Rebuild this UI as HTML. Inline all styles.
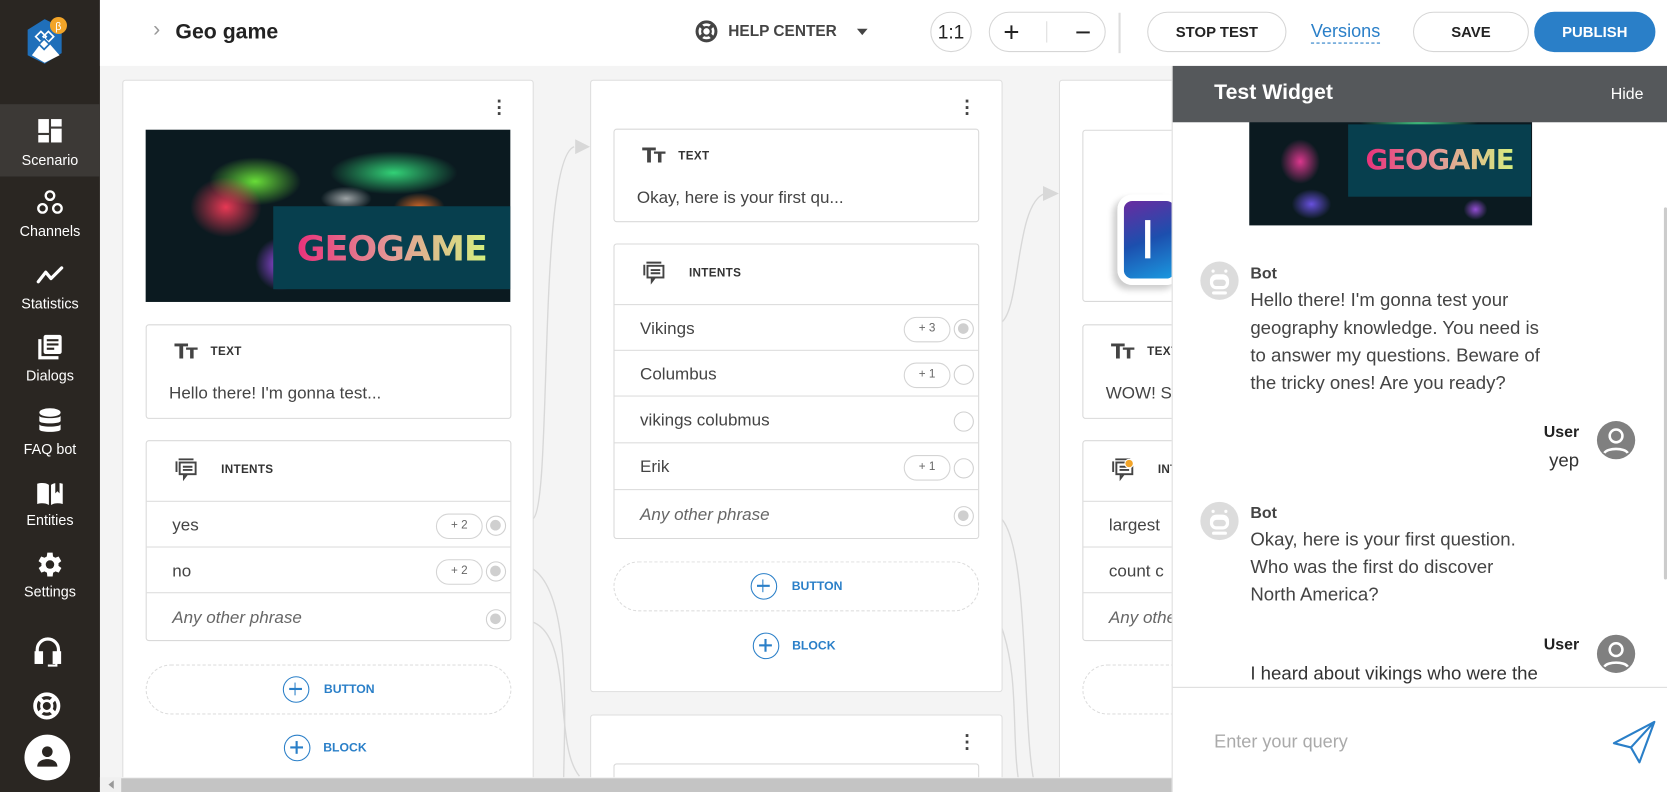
<!DOCTYPE html>
<html><head><meta charset="utf-8">
<style>
*{box-sizing:border-box;margin:0;padding:0}
html,body{width:1667px;height:792px;overflow:hidden;background:#f4f4f4;font-family:"Liberation Sans",sans-serif}
#w{position:absolute;left:0;top:0;width:1568px;height:745px;transform:scale(1.0632);transform-origin:0 0;background:#f4f4f4;overflow:hidden}
.a{position:absolute}
.side{left:0;top:0;width:94px;height:745px;background:#2a2622}
.nav{position:absolute;left:0;width:94px;text-align:center;color:#fff;font-size:13.5px}
.top{left:94px;top:0;width:1474px;height:62px;background:#fff}
.pill{position:absolute;border:1.5px solid #d6d6d6;border-radius:20px;height:38px;top:11px;font-size:14px;font-weight:bold;color:#222;display:flex;align-items:center;justify-content:center}
.card{position:absolute;background:#fff;border:1px solid #dedede;border-radius:3px}
.box{position:absolute;background:#fff;border:1px solid #d9d9d9;border-radius:3px}
.lbl{font-size:11px;font-weight:bold;color:#333;letter-spacing:.3px}
.row{position:absolute;left:0;right:0;border-top:1px solid #dcdcdc;font-size:16px;color:#444;padding-left:24px;padding-top:3px;display:flex;align-items:center}
.cnt{position:absolute;right:26px;width:44px;height:24px;border:1.5px solid #d4d4d4;border-radius:12px;font-size:11px;color:#666;text-align:center;line-height:21px}
.dot{position:absolute;right:4px;width:19px;height:19px;border:1.5px solid #d0d0d0;border-radius:50%}
.dot.f::after{content:"";position:absolute;left:3px;top:3px;width:10px;height:10px;border-radius:50%;background:#cfcfcf}
.dash{position:absolute;border:1.5px dashed #dcdcdc;border-radius:24px;display:flex;align-items:center;justify-content:center;color:#2a7fc8;font-size:11.5px;font-weight:bold;gap:14px}
.plus{width:25px;height:25px;border:1.7px solid #2a7fc8;border-radius:50%;position:relative;flex:none}
.plus::before{content:"";position:absolute;left:5px;width:12px;top:10px;height:1.7px;background:#2a7fc8}
.plus::after{content:"";position:absolute;top:5px;height:12px;left:10px;width:1.7px;background:#2a7fc8}
.map{position:absolute;overflow:hidden;background:
radial-gradient(ellipse 14% 25% at 22% 45%,rgba(255,60,90,.9),transparent 70%),
radial-gradient(ellipse 18% 20% at 30% 30%,rgba(120,255,60,.85),transparent 70%),
radial-gradient(ellipse 10% 22% at 37% 78%,rgba(170,80,255,.9),transparent 70%),
radial-gradient(ellipse 25% 18% at 68% 25%,rgba(60,255,140,.8),transparent 70%),
radial-gradient(ellipse 10% 10% at 55% 40%,rgba(255,255,255,.6),transparent 70%),
radial-gradient(ellipse 10% 12% at 75% 45%,rgba(255,120,40,.8),transparent 70%),
#0b1a20}
.geo{position:absolute;background:#073f4e;display:flex;align-items:center;justify-content:center;font-weight:bold;font-family:"DejaVu Sans","Liberation Sans",sans-serif;letter-spacing:-1px}
.geo span{background:linear-gradient(90deg,#e8317a,#e39a96 50%,#d6f07e);-webkit-background-clip:text;background-clip:text;color:transparent}
.ti{display:flex;align-items:center;gap:14px;position:absolute;left:24px}
.tt{font-weight:bold;font-size:19px;color:#444;letter-spacing:-2px;font-family:"DejaVu Sans",sans-serif}
.msg{position:absolute;font-size:17.5px;line-height:26px;color:#444}
.bav{position:absolute;width:36px;height:36px;border-radius:50%;background:#dcdcdc}
.uav{position:absolute;width:36px;height:36px;border-radius:50%;background:#808080;overflow:hidden}
</style></head><body><div id="w">

<!-- sidebar -->
<div class="a side">
 <svg class="a" style="left:22px;top:14px" width="44" height="52" viewBox="0 0 44 52"><path d="M20 4 L36 12 L36 36 L20 46 L4 38 L4 14Z" fill="#1f6fba"/><path d="M8 38 L20 22 L34 38 L20 45Z" fill="#fff"/><g fill="none" stroke="#fff" stroke-width="1.6"><rect x="13" y="17" width="7" height="7" transform="rotate(45 16.5 20.5)"/><rect x="20" y="17" width="7" height="7" transform="rotate(45 23.5 20.5)"/><rect x="16" y="24" width="7" height="7" transform="rotate(45 19.5 27.5)" stroke="#1f6fba"/></g><circle cx="33" cy="10" r="8" fill="#f2a428"/><text x="30" y="14" font-size="10" fill="#fff" font-family="Liberation Sans">β</text></svg>
 <div class="a" style="left:0;top:98px;width:94px;height:68px;background:#3c3936"></div>
 <div class="nav" style="top:111px"><svg width="24" height="24" viewBox="0 0 24 24" fill="#fff"><rect x="1" y="1" width="10" height="13"/><rect x="13" y="1" width="10" height="7"/><rect x="13" y="10" width="10" height="13"/><rect x="1" y="16" width="10" height="7"/></svg><div style="margin-top:5px">Scenario</div></div>
 <div class="nav" style="top:178px"><svg width="26" height="26" viewBox="0 0 26 26" fill="none" stroke="#fff" stroke-width="2.2"><circle cx="13" cy="6" r="4"/><circle cx="6" cy="18" r="4"/><circle cx="20" cy="18" r="4"/></svg><div style="margin-top:3px">Channels</div></div>
 <div class="nav" style="top:248px"><svg width="28" height="22" viewBox="0 0 28 22" fill="none" stroke="#fff" stroke-width="3" stroke-linecap="round" stroke-linejoin="round"><path d="M3 17 L10 8 L15 14 L25 4"/></svg><div style="margin-top:5px">Statistics</div></div>
 <div class="nav" style="top:314px"><svg width="26" height="26" viewBox="0 0 26 26" fill="#fff"><path d="M2 5h3v16h16v3H2z"/><rect x="7" y="1" width="17" height="18" rx="2"/><g fill="#2a2622"><rect x="10" y="5" width="11" height="2"/><rect x="10" y="9" width="11" height="2"/><rect x="10" y="13" width="7" height="2"/></g></svg><div style="margin-top:3px">Dialogs</div></div>
 <div class="nav" style="top:383px"><svg width="24" height="26" viewBox="0 0 24 26" fill="#fff"><ellipse cx="12" cy="5" rx="10" ry="4"/><path d="M2 8c0 3 20 3 20 0v5c0 3-20 3-20 0z"/><path d="M2 16c0 3 20 3 20 0v5c0 3-20 3-20 0z"/></svg><div style="margin-top:3px">FAQ bot</div></div>
 <div class="nav" style="top:452px"><svg width="26" height="24" viewBox="0 0 26 24" fill="#fff"><path d="M1 3c4-1 8-1 11 1v19c-3-2-7-2-11-1z"/><path d="M14 4c3-2 7-2 11-1v19c-4-1-8-1-11 1z"/><path d="M18 2v10l2-2 2 2V1z" fill="#2a2622"/></svg><div style="margin-top:3px">Entities</div></div>
 <div class="nav" style="top:516px"><svg width="30" height="30" viewBox="0 0 24 24" fill="#fff"><path d="M19.4 13a7.5 7.5 0 000-2l2.1-1.6-2-3.5-2.5 1a7 7 0 00-1.7-1L15 3h-4l-.4 2.9a7 7 0 00-1.7 1l-2.5-1-2 3.5L6.6 11a7.5 7.5 0 000 2l-2.1 1.6 2 3.5 2.5-1a7 7 0 001.7 1L11 21h4l.4-2.9a7 7 0 001.7-1l2.5 1 2-3.5z" transform="translate(-1 0)"/><circle cx="12" cy="12" r="3.2" fill="#2a2622"/></svg><div style="margin-top:0px">Settings</div></div>
 <svg class="a" style="left:31px;top:598px" width="28" height="30" viewBox="0 0 28 30" fill="none" stroke="#fff" stroke-width="3"><path d="M4 18v-5a10 10 0 0120 0v5"/><rect x="3" y="16" width="5" height="9" fill="#fff"/><rect x="20" y="16" width="5" height="9" fill="#fff"/><path d="M22 25v3h-8" stroke-width="2"/></svg>
 <svg class="a" style="left:31px;top:651px" width="26" height="26" viewBox="0 0 26 26"><circle cx="13" cy="13" r="11" fill="none" stroke="#fff" stroke-width="3.5"/><circle cx="13" cy="13" r="5" fill="none" stroke="#fff" stroke-width="2.5"/><g stroke="#fff" stroke-width="4"><path d="M5 5l4 4M21 5l-4 4M5 21l4-4M21 21l-4-4"/></g></svg>
 <div class="a" style="left:23px;top:691px;width:43px;height:43px;border-radius:50%;background:#fff"><svg style="position:absolute;left:11px;top:10px" width="21" height="22" viewBox="0 0 21 22" fill="#2a2622"><circle cx="10.5" cy="6" r="5"/><path d="M1 20c0-5 5-7 9.5-7s9.5 2 9.5 7z"/></svg></div>
</div>

<!-- top bar -->
<div class="a top">
 <div class="a" style="left:50px;top:17px;font-size:20px;color:#999">›</div>
 <div class="a" style="left:71px;top:19px;font-size:20px;font-weight:bold;color:#222">Geo game</div>
 <svg class="a" style="left:560px;top:19px" width="21" height="21" viewBox="0 0 26 26"><circle cx="13" cy="13" r="11" fill="none" stroke="#444" stroke-width="3.5"/><circle cx="13" cy="13" r="5" fill="none" stroke="#444" stroke-width="2.5"/><g stroke="#444" stroke-width="4"><path d="M5 5l4 4M21 5l-4 4M5 21l4-4M21 21l-4-4"/></g></svg>
 <div class="a" style="left:591px;top:22px;font-size:14.5px;font-weight:bold;color:#444">HELP CENTER</div>
 <div class="a" style="left:712px;top:27px;border:5px solid transparent;border-top:6px solid #444"></div>
 <div class="pill" style="left:781px;width:39px;font-weight:normal;font-size:18px">1:1</div>
 <div class="pill" style="left:836px;width:110px;font-weight:normal;font-size:26px;justify-content:space-around"><span>+</span><span style="width:1px;height:20px;background:#ddd"></span><span>−</span></div>
 <div class="a" style="left:958px;top:12px;width:1.5px;height:38px;background:#ddd"></div>
 <div class="pill" style="left:985px;width:131px">STOP TEST</div>
 <div class="a" style="left:1139px;top:20px;font-size:17px;color:#2a7fc8;border-bottom:1.5px dashed #2a7fc8;line-height:20px">Versions</div>
 <div class="pill" style="left:1235px;width:109px">SAVE</div>
 <div class="pill" style="left:1349px;width:114px;background:#2a7fc8;border-color:#2a7fc8;color:#fff">PUBLISH</div>
</div>

<!-- connectors -->
<svg class="a" style="left:0;top:0" width="1568" height="745" fill="none" stroke="#d8d8d8" stroke-width="1.3">
 <path d="M501 488 C520 480 505 150 540 138"/><path d="M541 131 l14 7 l-14 7z" fill="#d8d8d8" stroke="none"/>
 <path d="M942 303 C960 290 955 190 983 182"/><path d="M981 175 l15 7 l-15 7z" fill="#d8d8d8" stroke="none"/>
 <path d="M501 585 C540 600 520 700 545 730"/><path d="M501 535 C540 560 530 690 530 745"/>
 <path d="M942 488 C970 520 960 700 975 745"/><path d="M942 590 C960 640 950 700 960 745"/>
</svg>

<!-- card 1 -->
<div class="card" style="left:115px;top:75px;width:387px;height:680px">
 <div class="a" style="left:351px;top:16px;font-size:18px;color:#444;font-weight:bold;line-height:6px">·<br>·<br>·</div>
 <div class="map" style="left:21px;top:46px;width:343px;height:162px"><div class="geo" style="left:120px;top:72px;width:223px;height:78px;font-size:33px"><span>GEOGAME</span></div></div>
 <div class="box" style="left:21px;top:229px;width:344px;height:89px">
  <div class="ti" style="top:14px;left:26px"><span class="tt">Tт</span><span class="lbl">TEXT</span></div>
  <div class="a" style="left:21px;top:56px;font-size:16px;color:#444">Hello there! I'm gonna test...</div>
 </div>
 <div class="box" style="left:21px;top:338px;width:344px;height:189px">
  <div class="ti" style="top:16px;left:26px"><svg width="22" height="22" viewBox="0 0 22 22" fill="none" stroke="#444" stroke-width="1.8"><path d="M2 3v10"/><path d="M4 1h14"/><rect x="5" y="4" width="15" height="11"/><path d="M9 15v4l3-4"/><path d="M8 8h9M8 11h9"/></svg><span class="lbl" style="margin-left:8px">INTENTS</span></div>
  <div class="row" style="top:56px;height:43px">yes<div class="cnt">+ 2</div><div class="dot f"></div></div>
  <div class="row" style="top:99px;height:43px">no<div class="cnt">+ 2</div><div class="dot f"></div></div>
  <div class="row" style="top:142px;height:46px;font-style:italic;color:#666">Any other phrase<div class="dot f"></div></div>
 </div>
 <div class="dash" style="left:21px;top:549px;width:344px;height:47px"><div class="plus"></div>BUTTON</div>
 <div class="a" style="left:151px;top:615px;display:flex;align-items:center;gap:12px;color:#2a7fc8;font-size:11.5px;font-weight:bold"><div class="plus"></div>BLOCK</div>
</div>

<!-- card 2 -->
<div class="card" style="left:555px;top:75px;width:388px;height:576px">
 <div class="a" style="left:351px;top:16px;font-size:18px;color:#444;font-weight:bold;line-height:6px">·<br>·<br>·</div>
 <div class="box" style="left:21px;top:45px;width:344px;height:88px">
  <div class="ti" style="top:14px;left:26px"><span class="tt">Tт</span><span class="lbl">TEXT</span></div>
  <div class="a" style="left:21px;top:56px;font-size:16px;color:#444">Okay, here is your first qu...</div>
 </div>
 <div class="box" style="left:21px;top:153px;width:344px;height:278px">
  <div class="ti" style="top:16px;left:26px"><svg width="22" height="22" viewBox="0 0 22 22" fill="none" stroke="#444" stroke-width="1.8"><path d="M2 3v10"/><path d="M4 1h14"/><rect x="5" y="4" width="15" height="11"/><path d="M9 15v4l3-4"/><path d="M8 8h9M8 11h9"/></svg><span class="lbl" style="margin-left:8px">INTENTS</span></div>
  <div class="row" style="top:56px;height:43px">Vikings<div class="cnt">+ 3</div><div class="dot f"></div></div>
  <div class="row" style="top:99px;height:43px">Columbus<div class="cnt">+ 1</div><div class="dot"></div></div>
  <div class="row" style="top:142px;height:44px">vikings colubmus<div class="dot"></div></div>
  <div class="row" style="top:186px;height:44px">Erik<div class="cnt">+ 1</div><div class="dot"></div></div>
  <div class="row" style="top:230px;height:46px;font-style:italic;color:#666">Any other phrase<div class="dot f"></div></div>
 </div>
 <div class="dash" style="left:21px;top:452px;width:344px;height:47px"><div class="plus"></div>BUTTON</div>
 <div class="a" style="left:152px;top:519px;display:flex;align-items:center;gap:12px;color:#2a7fc8;font-size:11.5px;font-weight:bold"><div class="plus"></div>BLOCK</div>
</div>
<div class="card" style="left:555px;top:672px;width:388px;height:100px">
 <div class="a" style="left:351px;top:16px;font-size:18px;color:#444;font-weight:bold;line-height:6px">·<br>·<br>·</div>
 <div class="box" style="left:21px;top:45px;width:344px;height:60px"></div>
</div>

<!-- card 3 -->
<div class="card" style="left:996px;top:75px;width:388px;height:680px">
 <div class="box" style="left:21px;top:46px;width:344px;height:162px">
  <div class="a" style="left:32px;top:60px;width:60px;height:85px;border-radius:14px;background:linear-gradient(160deg,#6a2ba0,#1c4fae 50%,#1b9ae0);border:6px solid #fff;box-shadow:-4px 4px 6px rgba(0,0,0,.2)"><div style="position:absolute;left:20px;top:18px;width:5px;height:36px;background:#fff"></div></div>
 </div>
 <div class="box" style="left:21px;top:229px;width:344px;height:89px">
  <div class="ti" style="top:14px;left:26px"><span class="tt">Tт</span><span class="lbl">TEXT</span></div>
  <div class="a" style="left:21px;top:56px;font-size:16px;color:#444">WOW! S</div>
 </div>
 <div class="box" style="left:21px;top:338px;width:344px;height:189px">
  <div class="ti" style="top:16px;left:26px"><svg width="22" height="22" viewBox="0 0 22 22" fill="none" stroke="#444" stroke-width="1.8"><path d="M2 3v10"/><path d="M4 1h14"/><rect x="5" y="4" width="15" height="11"/><path d="M9 15v4l3-4"/><path d="M8 8h9M8 11h9"/><circle cx="17" cy="5" r="4" fill="#f2a428" stroke="#fff" stroke-width="1"/></svg><span class="lbl" style="margin-left:8px">INTENTS</span></div>
  <div class="row" style="top:56px;height:43px">largest</div>
  <div class="row" style="top:99px;height:43px">count c</div>
  <div class="row" style="top:142px;height:46px;font-style:italic;color:#666">Any other phrase</div>
 </div>
 <div class="dash" style="left:21px;top:549px;width:344px;height:47px"></div>
</div>

<!-- bottom scrollbar -->
<div class="a" style="left:94px;top:731px;width:1010px;height:14px;background:#f0f0f0"></div>
<div class="a" style="left:114px;top:732px;width:990px;height:13px;background:#c4c4c4"></div>
<div class="a" style="left:98px;top:734px;border:4px solid transparent;border-right:5px solid #999"></div>

<!-- widget -->
<div class="a" style="left:1102px;top:62px;width:466px;height:683px;background:#fff;border-left:1px solid #ddd">
 <div class="map" style="left:72px;top:50px;width:266px;height:100px;background:
radial-gradient(ellipse 10% 30% at 18% 40%,rgba(255,60,160,.85),transparent 70%),
radial-gradient(ellipse 10% 20% at 22% 80%,rgba(120,90,255,.85),transparent 70%),
radial-gradient(ellipse 30% 10% at 60% 3%,rgba(80,255,160,.8),transparent 70%),
radial-gradient(ellipse 6% 14% at 80% 85%,rgba(180,90,255,.8),transparent 70%),#0b1a20"><div class="geo" style="left:93px;top:5px;width:172px;height:68px;font-size:26px"><span>GEOGAME</span></div></div>
 <div class="a" style="left:0;top:0;width:466px;height:53px;background:#55585b;color:#fff">
  <div class="a" style="left:39px;top:14px;font-size:20px;font-weight:bold">Test Widget</div>
  <div class="a" style="left:412px;top:18px;font-size:15px">Hide</div>
 </div>
 <div class="bav" style="left:26px;top:184px"><svg width="36" height="36" viewBox="0 0 36 36"><rect x="9" y="12" width="18" height="14" rx="6" fill="#fff"/><rect x="12" y="17" width="12" height="6" rx="3" fill="#dcdcdc"/><circle cx="12" cy="9" r="1.5" fill="#fff"/><circle cx="24" cy="9" r="1.5" fill="#fff"/><rect x="11" y="28" width="14" height="3" rx="1.5" fill="#fff"/></svg></div>
 <div class="a" style="left:73px;top:187px;font-size:15px;font-weight:bold;color:#444">Bot</div>
 <div class="msg" style="left:73px;top:207px">Hello there! I'm gonna test your<br>geography knowledge. You need is<br>to answer my questions. Beware of<br>the tricky ones! Are you ready?</div>
 <div class="a" style="left:349px;top:336px;font-size:15px;font-weight:bold;color:#222">User</div>
 <div class="msg" style="left:354px;top:358px;color:#333">yep</div>
 <div class="uav" style="left:399px;top:334px"><svg width="36" height="36" viewBox="0 0 36 36" fill="none" stroke="#fff" stroke-width="2.4"><circle cx="18" cy="14" r="6"/><path d="M7 30c3-5 19-5 22 0"/></svg></div>
 <div class="bav" style="left:26px;top:410px"><svg width="36" height="36" viewBox="0 0 36 36"><rect x="9" y="12" width="18" height="14" rx="6" fill="#fff"/><rect x="12" y="17" width="12" height="6" rx="3" fill="#dcdcdc"/><circle cx="12" cy="9" r="1.5" fill="#fff"/><circle cx="24" cy="9" r="1.5" fill="#fff"/><rect x="11" y="28" width="14" height="3" rx="1.5" fill="#fff"/></svg></div>
 <div class="a" style="left:73px;top:412px;font-size:15px;font-weight:bold;color:#444">Bot</div>
 <div class="msg" style="left:73px;top:432px">Okay, here is your first question.<br>Who was the first do discover<br>North America?</div>
 <div class="a" style="left:349px;top:536px;font-size:15px;font-weight:bold;color:#222">User</div>
 <div class="uav" style="left:399px;top:535px"><svg width="36" height="36" viewBox="0 0 36 36" fill="none" stroke="#fff" stroke-width="2.4"><circle cx="18" cy="14" r="6"/><path d="M7 30c3-5 19-5 22 0"/></svg></div>
 <div class="a" style="left:73px;top:558px;width:320px;height:26px;overflow:hidden"><div class="msg" style="left:0;top:0;color:#333;white-space:nowrap">I heard about vikings who were the</div></div>
 <div class="a" style="left:0;top:584px;width:466px;height:1px;background:#ddd"></div>
 <div class="a" style="left:39px;top:626px;font-size:17px;color:#aaa">Enter your query</div>
 <svg class="a" style="left:413px;top:615px" width="42" height="42" viewBox="0 0 42 42" fill="none" stroke="#2a7fc8" stroke-width="2" stroke-linejoin="round"><path d="M40 2 L2 22 L18 26 L26 40 Z"/><path d="M40 2 L18 26"/></svg>
 <div class="a" style="left:462px;top:133px;width:3px;height:350px;background:#ccc;border-radius:2px"></div>
</div>

</div></body></html>
